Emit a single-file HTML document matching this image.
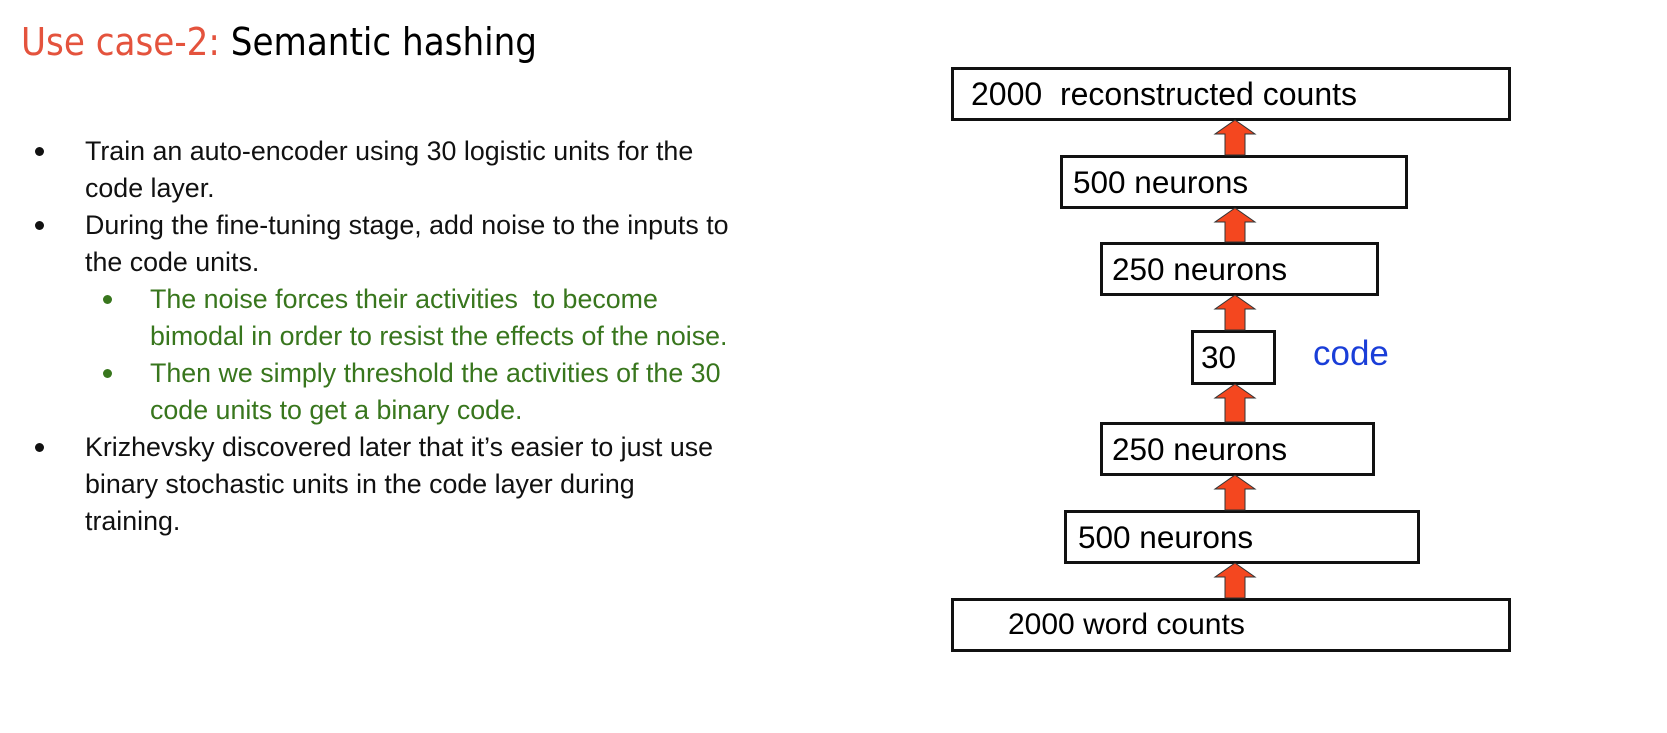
<!DOCTYPE html>
<html><head><meta charset="utf-8"><style>
body{margin:0;width:1667px;height:733px;background:#fff;position:relative;overflow:hidden;font-family:"Liberation Sans",Arial,sans-serif}
.t{position:absolute;left:21px;top:20px;font-family:"Liberation Sans Narrow","DejaVu Sans Condensed","Liberation Sans",sans-serif;font-size:38px;white-space:nowrap}
.l{position:absolute;font-size:26.8px;color:#111;white-space:nowrap;line-height:37px}
.g{color:#38761d}
.b{position:absolute;width:9px;height:9px;border-radius:50%;background:#111}
.bg{background:#38761d}
.box{position:absolute;border:3px solid #111;box-sizing:border-box;font-size:31.5px;color:#000;line-height:48px;white-space:nowrap}
</style></head><body>
<div class="t"><span style="color:#e4533d">Use case-2:</span> Semantic hashing</div>

<div class="b" style="left:35px;top:147px"></div>
<div class="l" style="left:85px;top:133px">Train an auto-encoder using 30 logistic units for the<br>code layer.</div>
<div class="b" style="left:35px;top:221px"></div>
<div class="l" style="left:85px;top:207px">During the fine-tuning stage, add noise to the inputs to<br>the code units.</div>
<div class="b bg" style="left:103px;top:295px"></div>
<div class="l g" style="left:150px;top:281px">The noise forces their activities&nbsp; to become<br>bimodal in order to resist the effects of the noise.</div>
<div class="b bg" style="left:103px;top:369px"></div>
<div class="l g" style="left:150px;top:355px">Then we simply threshold the activities of the 30<br>code units to get a binary code.</div>
<div class="b" style="left:35px;top:443px"></div>
<div class="l" style="left:85px;top:429px">Krizhevsky discovered later that it’s easier to just use<br>binary stochastic units in the code layer during<br>training.</div>

<div class="box" style="left:951px;top:67px;width:560px;height:54px;padding-left:17px;font-size:32px">2000&nbsp; reconstructed counts</div>
<div class="box" style="left:1060px;top:155px;width:348px;height:54px;padding-left:10px">500 neurons</div>
<div class="box" style="left:1100px;top:242px;width:279px;height:54px;padding-left:9px">250 neurons</div>
<div class="box" style="left:1191px;top:330px;width:85px;height:55px;padding-left:7px">30</div>
<div style="position:absolute;left:1313px;top:334px;font-size:35px;color:#1a3ed8">code</div>
<div class="box" style="left:1100px;top:422px;width:275px;height:54px;padding-left:9px">250 neurons</div>
<div class="box" style="left:1064px;top:510px;width:356px;height:54px;padding-left:11px">500 neurons</div>
<div class="box" style="left:951px;top:598px;width:560px;height:54px;padding-left:54px;font-size:30px">2000&nbsp;word counts</div>

<svg width="1667" height="733" style="position:absolute;left:0;top:0">
<g fill="#f4471f" stroke="#333" stroke-width="1">
<path d="M1225 155 L1225 134 L1215 134 L1235 120 L1255 134 L1245 134 L1245 155 Z"/>
<path d="M1225 242 L1225 222 L1215 222 L1235 208 L1255 222 L1245 222 L1245 242 Z"/>
<path d="M1225 330 L1225 309 L1215 309 L1235 295 L1255 309 L1245 309 L1245 330 Z"/>
<path d="M1225 422 L1225 398 L1215 398 L1235 384 L1255 398 L1245 398 L1245 422 Z"/>
<path d="M1225 510 L1225 489 L1215 489 L1235 475 L1255 489 L1245 489 L1245 510 Z"/>
<path d="M1225 598 L1225 577 L1215 577 L1235 563 L1255 577 L1245 577 L1245 598 Z"/>
</g>
</svg>
</body></html>
